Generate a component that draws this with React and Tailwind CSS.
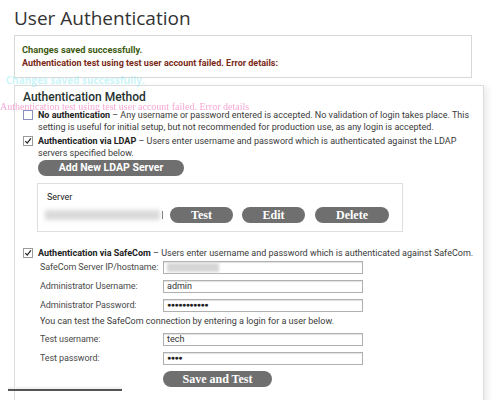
import React from 'react';

const sans = { fontFamily: '"Open Sans", "DejaVu Sans", sans-serif' };
const body = { fontFamily: 'Roboto, "Open Sans", sans-serif' };
const serif = { fontFamily: '"Liberation Serif", serif' };

const CheckBox = ({ checked, tint }) => (
  <span
    className={`mt-[1px] flex h-[10px] w-[10px] shrink-0 items-center justify-center border bg-white ${
      tint ? 'border-[#8f8fc0]' : 'border-[#9a9a9a]'
    }`}
  >
    {checked && (
      <svg viewBox="0 0 10 10" className="h-[10px] w-[10px]">
        <path d="M1.6 5.2 L4 7.6 L8.6 1.6" fill="none" stroke="#222" strokeWidth="1.6" />
      </svg>
    )}
  </span>
);

const PillButton = ({ children, className = '', font = serif, size = 'text-[12px]' }) => (
  <button
    className={`flex h-[16px] items-center justify-center rounded-full bg-[#6f6f6f] font-bold leading-none text-white ${size} ${className}`}
    style={font}
  >
    {children}
  </button>
);

const FormRow = ({ label, value, password, className = '' }) => (
  <div className={`flex h-[13px] items-center ${className}`}>
    <span className="w-[123px] shrink-0 whitespace-nowrap text-[9px] tracking-[-0.1px] text-[#4a4a4a]">{label}</span>
    <div className="flex h-[13px] w-[200px] items-center border border-[#b0b0b0] bg-white px-[3px] text-[9px] text-[#333] shadow-[inset_0_1px_1px_rgba(0,0,0,0.12)]">
      {password ? (
        <span className="text-[7px] leading-none tracking-[-0.5px] text-[#222]">{value}</span>
      ) : value === null ? (
        <span className="h-[9px] w-[52px] bg-[#d6d6d6] blur-[1.5px]" />
      ) : (
        value
      )}
    </div>
  </div>
);

export default function App() {
  return (
    <div className="relative h-[400px] w-[500px] overflow-hidden bg-white text-[#3a3a3a]" style={body}>
      <h1 className="pl-[14px] pt-[4px] text-[19px] leading-[28px] text-[#333]" style={sans}>
        User Authentication
      </h1>

      <div className="ml-[14px] mt-[3px] flex h-[43px] w-[458px] flex-col justify-center gap-[3px] border border-[#d8d8d8] pl-[7px] font-bold leading-[11px]">
        <p className="text-[9.3px] text-[#3d5a12]">Changes saved successfully.</p>
        <p className="text-[9px] text-[#7a2a18]">Authentication test using test user account failed. Error details:</p>
      </div>

      <div className="ml-[14px] mt-[7px] h-[330px] w-[470px] border border-[#dcdcdc] bg-white px-[8px] pt-[4px] shadow-[6px_0_6px_-2px_rgba(0,0,0,0.08)]">
        <h2 className="text-[12px] font-medium leading-[14px] text-[#263230]">Authentication Method</h2>

        <div className="mt-[5px] flex gap-[5px] text-[9px] leading-[12px]">
          <CheckBox tint />
          <p>
            <span className="font-bold text-[#222]">No authentication</span> – Any username or password entered is
            accepted. No validation of login takes place. This setting is useful for initial setup, but not
            recommended for production use, as any login is accepted.
          </p>
        </div>

        <div className="mt-[2px] flex gap-[5px] text-[9px] leading-[12px]">
          <CheckBox checked />
          <p>
            <span className="font-bold text-[#222]">Authentication via LDAP</span> – Users enter username and
            password which is authenticated against the LDAP servers specified below.
          </p>
        </div>

        <PillButton font={body} size="text-[10.5px]" className="ml-[15px] mt-[1px] w-[146px]">
          Add New LDAP Server
        </PillButton>

        <div className="ml-[14px] mt-[7px] h-[49px] w-[366px] border border-[#dedede] px-[9px] pt-[7px]">
          <p className="text-[9px] leading-[12px] text-[#222]">Server</p>
          <div className="mt-[4px] flex items-center">
            <span className="-ml-[2px] h-[10px] w-[115px] bg-[#dadada] blur-[2px]" />
            <span className="ml-[2px] h-[8px] w-[1px] bg-[#777]" />
            <PillButton className="ml-[7px] w-[63px]">Test</PillButton>
            <PillButton className="ml-[9px] w-[63px]">Edit</PillButton>
            <PillButton className="ml-[10px] w-[74px]">Delete</PillButton>
          </div>
        </div>

        <div className="mt-[15px] flex gap-[5px] text-[9px] leading-[12px]">
          <CheckBox checked />
          <p>
            <span className="font-bold text-[#222]">Authentication via SafeCom</span> – Users enter username and
            password which is authenticated against SafeCom.
          </p>
        </div>

        <div className="ml-[17px] flex flex-col">
          <FormRow className="mt-[2px]" label="SafeCom Server IP/hostname:" value={null} />
          <FormRow className="mt-[6px]" label="Administrator Username:" value="admin" />
          <FormRow className="mt-[6px]" label="Administrator Password:" value="●●●●●●●●●●●" password />
          <p className="mt-[3px] text-[9px] leading-[12px]">
            You can test the SafeCom connection by entering a login for a user below.
          </p>
          <FormRow className="mt-[6px]" label="Test username:" value="tech" />
          <FormRow className="mt-[6px]" label="Test password:" value="●●●●" password />
          <PillButton className="ml-[123px] mt-[6px] w-[109px]">Save and Test</PillButton>
        </div>
      </div>

      <div className="pointer-events-none absolute left-[8px] top-[386px] h-[3px] w-[114px] bg-gradient-to-b from-transparent to-[#ececec]" />
      <div className="pointer-events-none absolute left-[8px] top-[389px] h-[2px] w-[114px] bg-[#555]" />

      <p
        className="pointer-events-none absolute left-0 top-[103px] text-[10px] leading-[8px] text-[#f06ab4] opacity-60"
        style={serif}
      >
        Authentication test using test user account failed. Error details
      </p>
      <p
        className="pointer-events-none absolute left-[6px] top-[76px] text-[10px] font-bold leading-[8px] text-[#7ee8f0] opacity-40"
        style={sans}
      >
        Changes saved successfully.
      </p>
    </div>
  );
}
